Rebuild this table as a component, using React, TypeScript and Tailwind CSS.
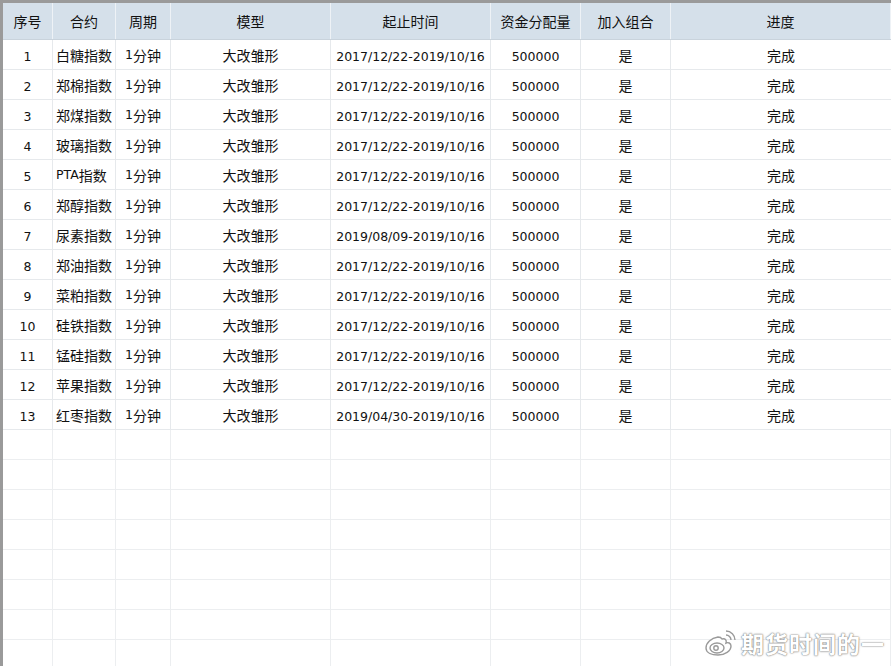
import React from 'react';

type Row = {
  id: number;
  name: string;
  range: string;
};

const rows: Row[] = [
  { id: 1, name: '白糖指数', range: '2017/12/22-2019/10/16' },
  { id: 2, name: '郑棉指数', range: '2017/12/22-2019/10/16' },
  { id: 3, name: '郑煤指数', range: '2017/12/22-2019/10/16' },
  { id: 4, name: '玻璃指数', range: '2017/12/22-2019/10/16' },
  { id: 5, name: 'PTA指数', range: '2017/12/22-2019/10/16' },
  { id: 6, name: '郑醇指数', range: '2017/12/22-2019/10/16' },
  { id: 7, name: '尿素指数', range: '2019/08/09-2019/10/16' },
  { id: 8, name: '郑油指数', range: '2017/12/22-2019/10/16' },
  { id: 9, name: '菜粕指数', range: '2017/12/22-2019/10/16' },
  { id: 10, name: '硅铁指数', range: '2017/12/22-2019/10/16' },
  { id: 11, name: '锰硅指数', range: '2017/12/22-2019/10/16' },
  { id: 12, name: '苹果指数', range: '2017/12/22-2019/10/16' },
  { id: 13, name: '红枣指数', range: '2019/04/30-2019/10/16' },
];

const headers = ['序号', '合约', '周期', '模型', '起止时间', '资金分配量', '加入组合', '进度'];

const cols = 'grid grid-cols-[50px_63px_55px_160px_160px_90px_90px_1fr]';
const cell = 'flex items-center justify-center pt-[2px] border-r border-[#e6e9ec] whitespace-nowrap';
const numCell = 'flex items-center justify-center pt-[5px] border-r border-[#e6e9ec] whitespace-nowrap';
const num = '[font-family:"DejaVu_Sans","Noto_Sans_CJK_SC",sans-serif] text-[12.5px]';

const WeiboLogo = () => (
  <svg width="34" height="28" viewBox="0 0 34 28" fill="none" stroke="#9a9a9a" strokeWidth="1.4">
    <path d="M14 8 C7 9 2 14 2 19 C2 24 8 26 14 26 C21 26 27 22 27 17 C27 14 24 13 22 14 C23 11 21 9 18 10 C17 8 16 8 14 8 Z" fill="#fff" />
    <ellipse cx="13" cy="19" rx="7" ry="5" />
    <circle cx="12" cy="19" r="2.2" />
    <path d="M22 6 A5 5 0 0 1 27 11" />
    <path d="M22 2 A9 9 0 0 1 31 11" />
  </svg>
);

export default function App() {
  return (
    <div className="relative h-[666px] w-[891px] overflow-hidden bg-white border-t-[3px] border-l-[3px] border-[#9a9a9a] text-[#111] [font-family:'Noto_Sans_CJK_SC',sans-serif] text-[13px]">
      <div className={`${cols} h-[37px] bg-[#d5e0ea] border-b border-[#c9d3dc]`}>
        {headers.map((h) => (
          <div key={h} className="flex items-center justify-center border-r border-[#eef2f6] text-[14px]">
            {h}
          </div>
        ))}
      </div>
      {rows.map((r) => (
        <div key={r.id} className={`${cols} h-[30px] border-b border-[#e6e9ec]`}>
          <div className={`${numCell} ${num}`}>{r.id}</div>
          <div className="flex items-center justify-start pt-[2px] pl-[3px] border-r border-[#e6e9ec] whitespace-nowrap text-[14px]">
            {r.name.startsWith('PTA') ? (
              <>
                <span className={num}>PTA</span>
                <span>指数</span>
              </>
            ) : (
              r.name
            )}
          </div>
          <div className={`${cell} text-[14px]`}>
            <span className={num}>1</span>分钟
          </div>
          <div className={`${cell} text-[14px]`}>大改雏形</div>
          <div className={`${numCell} ${num}`}>{r.range}</div>
          <div className={`${numCell} ${num}`}>500000</div>
          <div className={`${cell} text-[14px]`}>是</div>
          <div className={`${cell} text-[14px] border-r-0`}>完成</div>
        </div>
      ))}
      {Array.from({ length: 8 }).map((_, i) => (
        <div key={i} className={`${cols} h-[30px] border-b border-[#eceef0]`}>
          {headers.map((h) => (
            <div key={h} className="border-r border-[#eceef0]" />
          ))}
        </div>
      ))}
      <div className="absolute right-[6px] bottom-[6px] flex items-center gap-[3px]">
        <WeiboLogo />
        <span className="text-[23px] font-bold text-white tracking-[1px] [text-shadow:0_0_2px_#777,0_0_1px_#777]">
          期货时间的一
        </span>
      </div>
    </div>
  );
}
